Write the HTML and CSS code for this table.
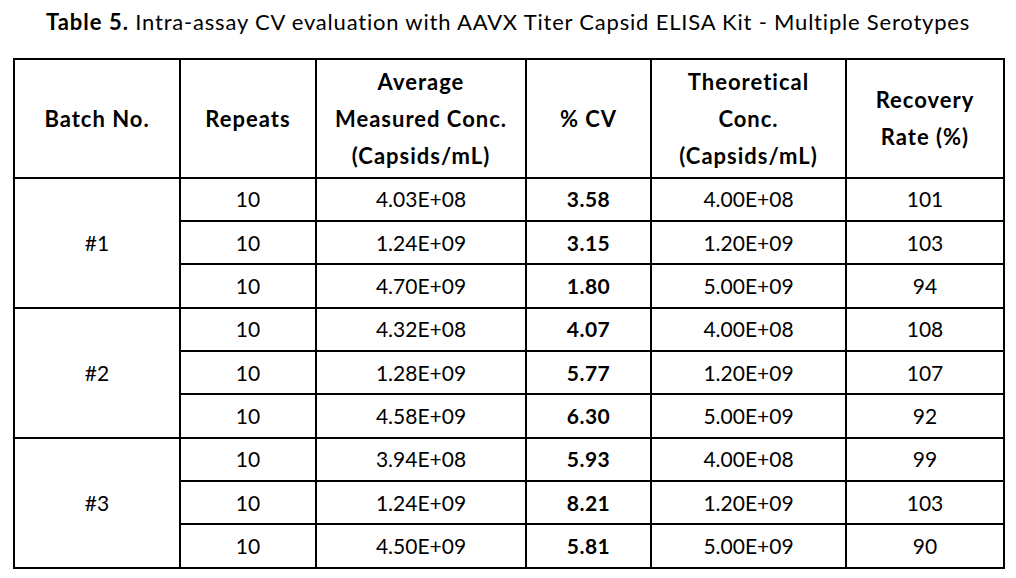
FILE: index.html
```html
<!DOCTYPE html>
<html>
<head>
<meta charset="utf-8">
<link rel="stylesheet" href="styles.css">
</head>
<body>
<p class="title"><b>Table 5.</b> Intra-assay CV evaluation with AAVX Titer Capsid ELISA Kit - Multiple Serotypes</p>
<table class="data">
  <colgroup>
    <col class="c1"><col class="c2"><col class="c3"><col class="c4"><col class="c5"><col class="c6">
  </colgroup>
  <thead>
    <tr class="head">
      <th>Batch No.</th>
      <th>Repeats</th>
      <th>Average<br>Measured Conc.<br>(Capsids/mL)</th>
      <th>% CV</th>
      <th>Theoretical<br>Conc.<br>(Capsids/mL)</th>
      <th>Recovery<br>Rate (%)</th>
    </tr>
  </thead>
  <tbody>
    <tr><td rowspan="3">#1</td><td>10</td><td>4.03E+08</td><td class="cv">3.58</td><td>4.00E+08</td><td>101</td></tr>
    <tr><td>10</td><td>1.24E+09</td><td class="cv">3.15</td><td>1.20E+09</td><td>103</td></tr>
    <tr><td>10</td><td>4.70E+09</td><td class="cv">1.80</td><td>5.00E+09</td><td>94</td></tr>
    <tr><td rowspan="3">#2</td><td>10</td><td>4.32E+08</td><td class="cv">4.07</td><td>4.00E+08</td><td>108</td></tr>
    <tr><td>10</td><td>1.28E+09</td><td class="cv">5.77</td><td>1.20E+09</td><td>107</td></tr>
    <tr><td>10</td><td>4.58E+09</td><td class="cv">6.30</td><td>5.00E+09</td><td>92</td></tr>
    <tr><td rowspan="3">#3</td><td>10</td><td>3.94E+08</td><td class="cv">5.93</td><td>4.00E+08</td><td>99</td></tr>
    <tr><td>10</td><td>1.24E+09</td><td class="cv">8.21</td><td>1.20E+09</td><td>103</td></tr>
    <tr><td>10</td><td>4.50E+09</td><td class="cv">5.81</td><td>5.00E+09</td><td>90</td></tr>
  </tbody>
</table>
</body>
</html>
```

FILE: styles.css
```css
html, body {
  margin: 0;
  padding: 0;
  background: #ffffff;
}

body {
  font-family: "Lato", "Open Sans", "Liberation Sans", sans-serif;
  color: #000000;
}

.title {
  margin: 0;
  padding-top: 9px;
  height: 49px;
  font-size: 22px;
  line-height: 26px;
  letter-spacing: 0.8px;
  text-align: center;
  white-space: nowrap;
}

.title b {
  font-weight: 700;
  letter-spacing: 1px;
}

.data {
  margin-left: 13px;
  width: 992px;
  table-layout: fixed;
  border-collapse: collapse;
  border: 2px solid #000;
  font-size: 21px;
}

.c1 { width: 166px; }
.c2 { width: 136px; }
.c3 { width: 210px; }
.c4 { width: 125px; }
.c5 { width: 195px; }
.c6 { width: 158px; }

.data th,
.data td {
  border: 2px solid #000;
  padding: 0;
  text-align: center;
  vertical-align: middle;
}

.data th {
  font-size: 22px;
  font-weight: 700;
  line-height: 37px;
  letter-spacing: 1px;
}

.head {
  height: 118.5px;
}

.data tbody tr {
  height: 43.35px;
}

.data td {
  line-height: 24px;
}

.cv {
  font-weight: 700;
  letter-spacing: 0.5px;
}
```
